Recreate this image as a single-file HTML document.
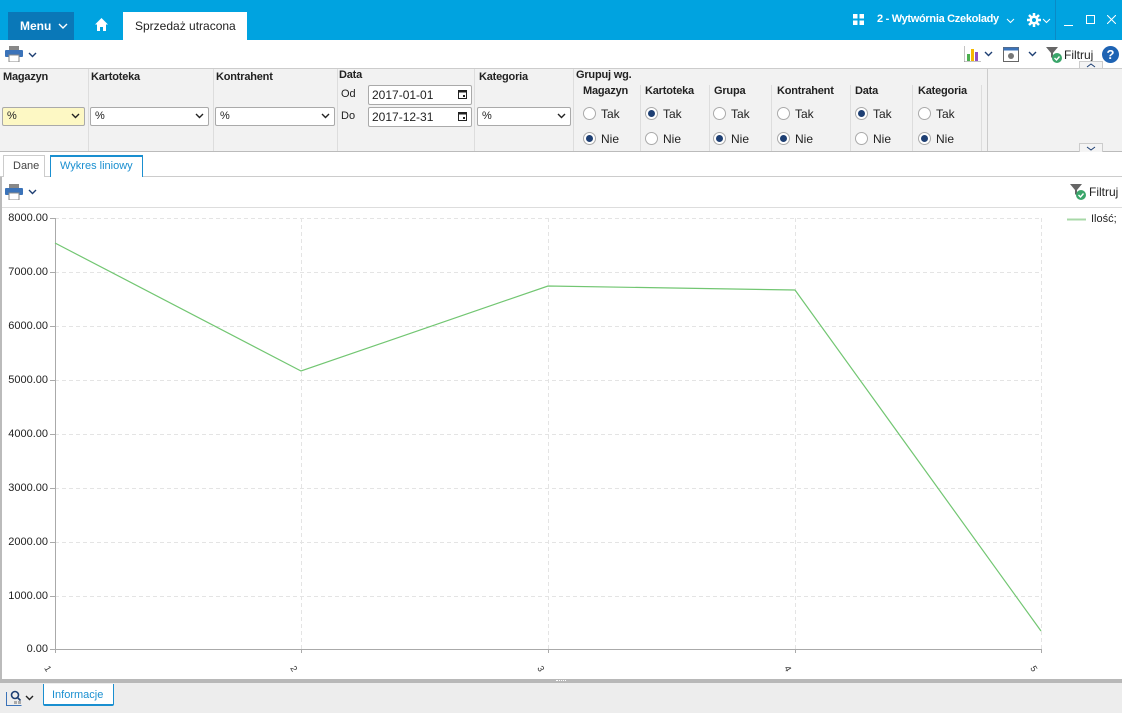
<!DOCTYPE html>
<html><head><meta charset="utf-8"><style>
*{margin:0;padding:0;box-sizing:border-box}
body{width:1122px;height:713px;overflow:hidden;font-family:"Liberation Sans",sans-serif;font-size:12px;color:#222;background:#fff;position:relative}
.a{position:absolute}
.lbl{position:absolute;font-size:11px;font-weight:bold;color:#222;letter-spacing:-0.2px;white-space:nowrap}
.sel{position:absolute;height:19px;border:1px solid #aaa;border-radius:2px;background:#fff;font-size:11px;padding:2px 4px}
.sel svg{position:absolute;right:4px;top:5px}
.vs{position:absolute;width:1px;background:#ddd}
.rad{position:absolute;width:13px;height:13px;border-radius:50%;border:1px solid #aaa;background:#fff}
.rad.on::after{content:"";position:absolute;left:2px;top:2px;width:7px;height:7px;border-radius:50%;background:#1e3f73}
.rt{position:absolute;font-size:12px}
.yl{position:absolute;left:0;width:48px;text-align:right;font-size:11px;color:#222}
</style></head><body>
<!-- header -->
<div class="a" style="left:0;top:0;width:1122px;height:40px;background:#00a3e0"></div>
<div class="a" style="left:8px;top:12px;width:66px;height:28px;background:#0a78b8"></div>
<div class="a" style="left:20px;top:19px;color:#fff;font-weight:bold;font-size:12px">Menu</div>
<svg class="a" style="left:58px;top:23px" width="10" height="6"><path d="M1 1l4 4 4-4" stroke="#fff" fill="none" stroke-width="1.4"/></svg>
<svg class="a" style="left:95px;top:18px" width="13" height="13"><path d="M0 6.5L6.5 0 13 6.5H11V13H8V9H5v4H2V6.5z" fill="#fff"/></svg>
<div class="a" style="left:123px;top:12px;width:124px;height:28px;background:#fff;font-size:12px;padding:7px 0 0 12px;white-space:nowrap">Sprzedaż utracona</div>
<svg class="a" style="left:853px;top:14px" width="11" height="11"><rect x="0" y="0" width="4.5" height="4.5" fill="#fff"/><rect x="6.5" y="0" width="4.5" height="4.5" fill="#fff"/><rect x="0" y="6.5" width="4.5" height="4.5" fill="#fff"/><rect x="6.5" y="6.5" width="4.5" height="4.5" fill="#fff"/></svg>
<div class="a" style="left:877px;top:13px;color:#fff;font-weight:bold;font-size:11px;letter-spacing:-0.3px;white-space:nowrap">2 - Wytwórnia Czekolady</div>
<svg class="a" style="left:1006px;top:18px" width="9" height="6"><path d="M1 1l3.5 3.5L8 1" stroke="#fff" fill="none"/></svg>
<svg class="a" style="left:1027px;top:13px" width="14" height="14" viewBox="0 0 14 14"><circle cx="7" cy="7" r="4.5" fill="#fff"/><g stroke="#fff" stroke-width="2.5"><path d="M7 0v14M0 7h14M2 2l10 10M12 2L2 12"/></g><circle cx="7" cy="7" r="2" fill="#00a3e0"/></svg>
<svg class="a" style="left:1042px;top:18px" width="9" height="6"><path d="M1 1l3.5 3.5L8 1" stroke="#fff" fill="none"/></svg>
<div class="a" style="left:1055px;top:0;width:1px;height:40px;background:#0a8ac6"></div>
<div class="a" style="left:1064px;top:25px;width:9px;height:1px;background:#fff"></div>
<div class="a" style="left:1086px;top:15px;width:9px;height:9px;border:1px solid #fff"></div>
<svg class="a" style="left:1107px;top:15px" width="9" height="9"><path d="M0 0l9 9M9 0L0 9" stroke="#fff"/></svg>
<!-- toolbar -->
<svg class="a" style="left:5px;top:46px" width="18" height="16"><rect x="4" y="0" width="10" height="4" fill="#888"/><rect x="0" y="4" width="18" height="7" rx="1" fill="#3b73b9"/><rect x="4" y="9" width="10" height="7" fill="#fff" stroke="#888"/></svg>
<svg class="a" style="left:28px;top:52px" width="9" height="6"><path d="M1 1l3.5 3.5L8 1" stroke="#1e3f73" fill="none" stroke-width="1.4"/></svg>
<svg class="a" style="left:964px;top:46px" width="17" height="16"><path d="M0 0v16h17" stroke="#888" fill="none"/><rect x="3" y="8" width="3" height="7" fill="#4caf50"/><rect x="7" y="3" width="3" height="12" fill="#f5b800"/><rect x="11" y="6" width="3" height="9" fill="#8e4fc4"/></svg>
<svg class="a" style="left:984px;top:51px" width="9" height="6"><path d="M1 1l3.5 3.5L8 1" stroke="#1e3f73" fill="none" stroke-width="1.4"/></svg>
<svg class="a" style="left:1003px;top:47px" width="16" height="15"><rect x=".5" y=".5" width="15" height="14" fill="#fff" stroke="#666"/><rect x=".5" y=".5" width="15" height="3" fill="#3b73b9"/><circle cx="8" cy="9" r="3" fill="#777"/></svg>
<svg class="a" style="left:1028px;top:51px" width="9" height="6"><path d="M1 1l3.5 3.5L8 1" stroke="#1e3f73" fill="none" stroke-width="1.4"/></svg>
<svg class="a" style="left:1046px;top:47px" width="18" height="16"><path d="M0 0h12L7 6v6L5 10V6z" fill="#666"/><circle cx="11" cy="11" r="5" fill="#3aa56a"/><path d="M8.5 11l2 2 3-3.5" stroke="#fff" fill="none" stroke-width="1.4"/></svg>
<div class="a" style="left:1064px;top:48px;font-size:12px">Filtruj</div>
<div class="a" style="left:1102px;top:46px;width:17px;height:17px;border-radius:50%;background:#1e63b3;color:#fff;font-weight:bold;font-size:13px;text-align:center;line-height:17px">?</div>
<div class="a" style="left:1079px;top:61px;width:24px;height:8px;border:1px solid #ccc;border-bottom:none;background:#f4f4f4"></div>
<svg class="a" style="left:1086px;top:63px" width="10" height="5"><path d="M1 4l4-3 4 3" stroke="#1e3f73" fill="none"/></svg>
<!-- filter panel -->
<div class="a" style="left:0;top:68px;width:1122px;height:84px;background:#f2f2f2;border-top:1px solid #ccc;border-bottom:1px solid #bbb"></div>
<div class="vs" style="left:88px;top:69px;height:82px"></div>
<div class="vs" style="left:213px;top:69px;height:82px"></div>
<div class="vs" style="left:337px;top:69px;height:82px"></div>
<div class="vs" style="left:474px;top:69px;height:82px"></div>
<div class="vs" style="left:573px;top:69px;height:82px"></div>
<div class="vs" style="left:640px;top:85px;height:66px"></div>
<div class="vs" style="left:709px;top:85px;height:66px"></div>
<div class="vs" style="left:771px;top:85px;height:66px"></div>
<div class="vs" style="left:850px;top:85px;height:66px"></div>
<div class="vs" style="left:912px;top:85px;height:66px"></div>
<div class="vs" style="left:981px;top:85px;height:66px"></div>
<div class="vs" style="left:987px;top:69px;height:82px;background:#ccc"></div>
<div class="lbl" style="left:3px;top:71px">Magazyn</div>
<div class="lbl" style="left:91px;top:71px">Kartoteka</div>
<div class="lbl" style="left:216px;top:71px">Kontrahent</div>
<div class="lbl" style="left:339px;top:69px">Data</div>
<div class="lbl" style="left:479px;top:71px">Kategoria</div>
<div class="lbl" style="left:576px;top:69px">Grupuj wg.</div>
<div class="sel" style="left:2px;top:107px;width:83px;background:#fdf8c4">%<svg width="9" height="6"><path d="M1 1l3.5 3.5L8 1" stroke="#222" fill="none" stroke-width="1.4"/></svg></div>
<div class="sel" style="left:90px;top:107px;width:119px">%<svg width="9" height="6"><path d="M1 1l3.5 3.5L8 1" stroke="#222" fill="none" stroke-width="1.4"/></svg></div>
<div class="sel" style="left:215px;top:107px;width:120px">%<svg width="9" height="6"><path d="M1 1l3.5 3.5L8 1" stroke="#222" fill="none" stroke-width="1.4"/></svg></div>
<div class="sel" style="left:477px;top:107px;width:94px">%<svg width="9" height="6"><path d="M1 1l3.5 3.5L8 1" stroke="#222" fill="none" stroke-width="1.4"/></svg></div>
<div class="a" style="left:341px;top:88px;font-size:11px">Od</div>
<div class="a" style="left:341px;top:110px;font-size:11px">Do</div>
<div class="sel" style="left:368px;top:85px;width:104px;height:20px;font-size:12px;padding:2px 3px">2017-01-01<svg width="9" height="9" style="top:4px"><rect x=".5" y=".5" width="8" height="8" fill="none" stroke="#222"/><rect x=".5" y=".5" width="8" height="2" fill="#222"/><rect x="5" y="5" width="2" height="2" fill="#222"/></svg></div>
<div class="sel" style="left:368px;top:107px;width:104px;height:20px;font-size:12px;padding:2px 3px">2017-12-31<svg width="9" height="9" style="top:4px"><rect x=".5" y=".5" width="8" height="8" fill="none" stroke="#222"/><rect x=".5" y=".5" width="8" height="2" fill="#222"/><rect x="5" y="5" width="2" height="2" fill="#222"/></svg></div>
<div class="lbl" style="left:583px;top:85px">Magazyn</div>
<div class="lbl" style="left:645px;top:85px">Kartoteka</div>
<div class="lbl" style="left:714px;top:85px">Grupa</div>
<div class="lbl" style="left:777px;top:85px">Kontrahent</div>
<div class="lbl" style="left:855px;top:85px">Data</div>
<div class="lbl" style="left:918px;top:85px">Kategoria</div>
<div class="rad" style="left:583px;top:107px"></div><div class="rt" style="left:601px;top:107px">Tak</div>
<div class="rad on" style="left:583px;top:132px"></div><div class="rt" style="left:601px;top:132px">Nie</div>
<div class="rad on" style="left:645px;top:107px"></div><div class="rt" style="left:663px;top:107px">Tak</div>
<div class="rad" style="left:645px;top:132px"></div><div class="rt" style="left:663px;top:132px">Nie</div>
<div class="rad" style="left:713px;top:107px"></div><div class="rt" style="left:731px;top:107px">Tak</div>
<div class="rad on" style="left:713px;top:132px"></div><div class="rt" style="left:731px;top:132px">Nie</div>
<div class="rad" style="left:777px;top:107px"></div><div class="rt" style="left:795px;top:107px">Tak</div>
<div class="rad on" style="left:777px;top:132px"></div><div class="rt" style="left:795px;top:132px">Nie</div>
<div class="rad on" style="left:855px;top:107px"></div><div class="rt" style="left:873px;top:107px">Tak</div>
<div class="rad" style="left:855px;top:132px"></div><div class="rt" style="left:873px;top:132px">Nie</div>
<div class="rad" style="left:918px;top:107px"></div><div class="rt" style="left:936px;top:107px">Tak</div>
<div class="rad on" style="left:918px;top:132px"></div><div class="rt" style="left:936px;top:132px">Nie</div>
<div class="a" style="left:1079px;top:143px;width:24px;height:9px;border:1px solid #ccc;border-bottom:none;background:#f4f4f4"></div>
<svg class="a" style="left:1086px;top:146px" width="10" height="5"><path d="M1 1l4 3 4-3" stroke="#1e3f73" fill="none"/></svg>
<!-- tabs -->
<div class="a" style="left:0;top:176px;width:1122px;height:1px;background:#ccc"></div>
<div class="a" style="left:3px;top:155px;width:42px;height:22px;border:1px solid #ccc;border-bottom:none;background:#fff;font-size:11px;padding:4px 0 0 9px;color:#444">Dane</div>
<div class="a" style="left:50px;top:155px;width:93px;height:22px;border:1px solid #1a8fd0;border-top:2px solid #1a8fd0;border-bottom:none;background:#fff;font-size:11px;padding:3px 0 0 9px;color:#1a8fd0;white-space:nowrap">Wykres liniowy</div>
<!-- chart panel -->
<div class="a" style="left:0;top:177px;width:2px;height:503px;background:#bbb"></div>
<svg class="a" style="left:5px;top:184px" width="18" height="16"><rect x="4" y="0" width="10" height="4" fill="#888"/><rect x="0" y="4" width="18" height="7" rx="1" fill="#3b73b9"/><rect x="4" y="9" width="10" height="7" fill="#fff" stroke="#888"/></svg>
<svg class="a" style="left:28px;top:189px" width="9" height="6"><path d="M1 1l3.5 3.5L8 1" stroke="#1e3f73" fill="none" stroke-width="1.4"/></svg>
<svg class="a" style="left:1070px;top:184px" width="18" height="16"><path d="M0 0h12L7 6v6L5 10V6z" fill="#666"/><circle cx="11" cy="11" r="5" fill="#3aa56a"/><path d="M8.5 11l2 2 3-3.5" stroke="#fff" fill="none" stroke-width="1.4"/></svg>
<div class="a" style="left:1089px;top:185px;font-size:12px">Filtruj</div>
<div class="a" style="left:2px;top:207px;width:1120px;height:1px;background:#ddd"></div>
<svg class="a" style="left:0;top:0" width="1122" height="713">
<g stroke="#e4e4e4" stroke-dasharray="4,3">
<path d="M55 218.5H1041M55 272.5H1041M55 326.5H1041M55 380.5H1041M55 434.5H1041M55 488.5H1041M55 542.5H1041M55 596.5H1041"/>
<path d="M301.5 218V649M548.5 218V649M795.5 218V649M1041.5 218V649"/>
</g>
<g stroke="#aaa"><path d="M55.5 218V653M50 649.5H1041M50 218.5H55M50 272.5H55M50 326.5H55M50 380.5H55M50 434.5H55M50 488.5H55M50 542.5H55M50 596.5H55M301.5 649v4M548.5 649v4M795.5 649v4M1041.5 649v4"/></g>
<polyline points="55,243 301,371 548,286 795,290 1041,631" fill="none" stroke="#72c672" stroke-width="1.2"/>
<path d="M1067 219.5H1086" stroke="#a8d8a8" stroke-width="2"/>
<g font-family="Liberation Sans" font-size="9" fill="#333">
<text transform="translate(44,668) rotate(60)">1</text>
<text transform="translate(290,668) rotate(60)">2</text>
<text transform="translate(537,668) rotate(60)">3</text>
<text transform="translate(784,668) rotate(60)">4</text>
<text transform="translate(1030,668) rotate(60)">5</text>
</g>
</svg>
<div class="a" style="left:1091px;top:213px;font-size:11px">Ilość;</div>
<div class="yl" style="top:212px">8000.00</div>
<div class="yl" style="top:266px">7000.00</div>
<div class="yl" style="top:320px">6000.00</div>
<div class="yl" style="top:374px">5000.00</div>
<div class="yl" style="top:428px">4000.00</div>
<div class="yl" style="top:482px">3000.00</div>
<div class="yl" style="top:536px">2000.00</div>
<div class="yl" style="top:590px">1000.00</div>
<div class="yl" style="top:643px">0.00</div>
<!-- footer -->
<div class="a" style="left:0;top:679px;width:1122px;height:4px;background:#b8b8b8"></div>
<div class="a" style="left:556px;top:680px;width:10px;height:1px;border-top:1px dotted #fff"></div>
<div class="a" style="left:0;top:683px;width:1122px;height:30px;background:#ededed"></div>
<svg class="a" style="left:6px;top:689px" width="16" height="17"><path d="M.5 3v13.5h15" stroke="#3b73b9" fill="none"/><circle cx="9" cy="6" r="3.5" stroke="#1e3f73" fill="none" stroke-width="1.6"/><path d="M11.5 8.5l3 3" stroke="#1e3f73" stroke-width="1.6"/><rect x="8" y="12" width="3" height="3" fill="#aaa"/><rect x="12" y="12" width="3" height="3" fill="#aaa"/></svg>
<svg class="a" style="left:25px;top:695px" width="9" height="6"><path d="M1 1l3.5 3.5L8 1" stroke="#222" fill="none" stroke-width="1.4"/></svg>
<div class="a" style="left:43px;top:684px;width:71px;height:22px;border:1px solid #1a8fd0;border-bottom:2px solid #1a8fd0;border-top:none;background:#fff;border-radius:0 0 2px 2px;color:#1a8fd0;font-size:11px;padding:5px 0 0 8px">Informacje</div>
</body></html>
